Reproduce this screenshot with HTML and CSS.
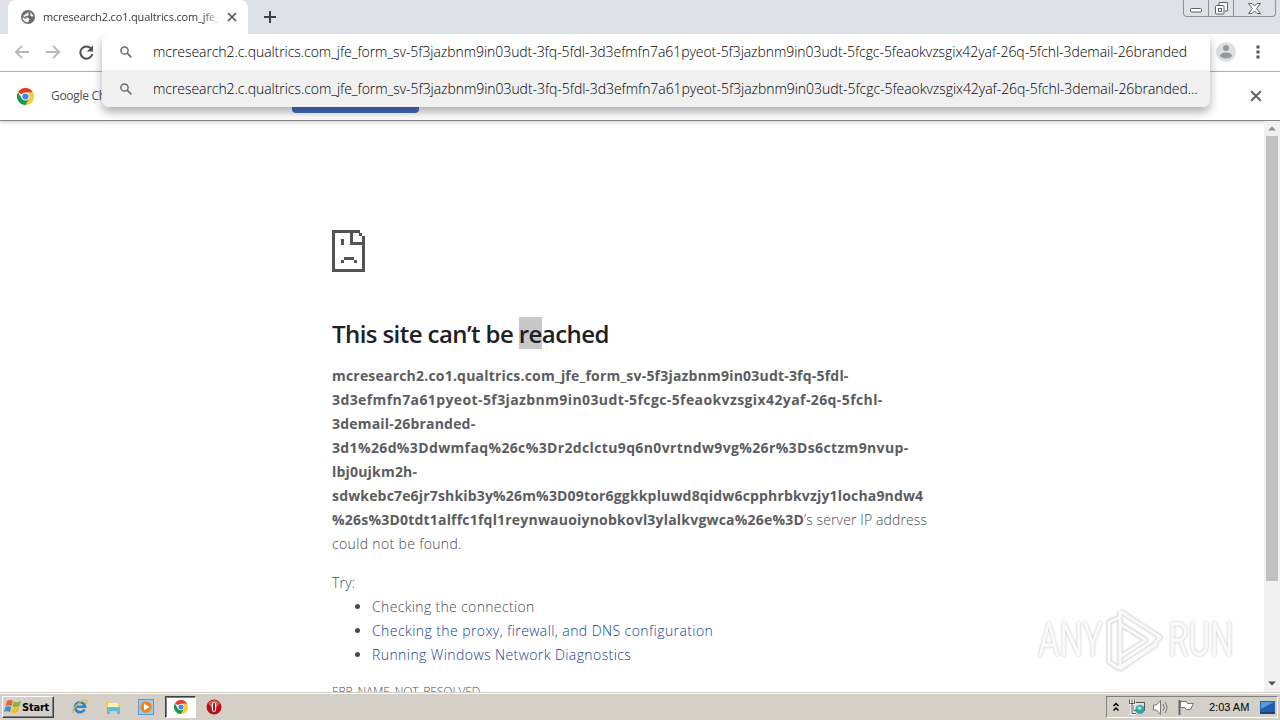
FILE: index.html
```html
<!DOCTYPE html>
<html lang="en">
<head>
  <meta charset="UTF-8" />
  <meta name="viewport" content="width=device-width, initial-scale=1.0" />
  <title>mcresearch2.co1.qualtrics.com</title>
  <link rel="stylesheet" href="styles.css">
</head>
<body>
  <svg class="defs" width="0" height="0">
    <symbol id="chrome" viewBox="0 0 24 24">
      <path d="M12 12 1.6 6A12 12 0 0 1 22.4 6Z" fill="#e33b2e"/>
      <path d="M22.4 6A12 12 0 0 1 12 24L17 14.500 12 6Z" fill="#fcc934"/>
      <path d="M1.600 6A12 12 0 0 0 12 24L17.200 15 12 12 7 15Z" fill="#1e9648"/>
      <circle cx="12" cy="12" r="5.600" fill="#fff"/>
      <circle cx="12" cy="12" r="4.400" fill="#4285f4"/>
    </symbol>
    <symbol id="search" viewBox="0 0 12 12">
      <circle cx="4.500" cy="4.500" r="3.600" fill="none" stroke="#6b6e72" stroke-width="1.500"/>
      <path d="M7.200 7.200 11.300 11.300" stroke="#6b6e72" stroke-width="1.700"/>
    </symbol>
    <symbol id="cross" viewBox="0 0 10 10">
      <path d="M1 1 9 9M9 1 1 9" stroke="currentColor" stroke-width="1.700"/>
    </symbol>
  </svg>

  <div class="screen">
    <div class="tabstrip">
      <div class="tab">
        <svg class="globe" width="14" height="14" viewBox="0 0 14 14"><circle cx="7" cy="7" r="7" fill="#686b70"/><path d="M8 1.400 7 3.300 8.300 4.600 6.500 6H4.500L4 7.200 7 7.500 8.500 9.500 7 12.600Q1.800 12 1.400 7L4 8.800 5.500 9 4.500 7.500 2 6ZM9.500 2 12.500 6 11 6.800 9.300 5.500Z" fill="#f4f5f6"/></svg>
        <span class="tab-title">mcresearch2.co1.qualtrics.com_jfe_</span>
        <svg class="tab-close" width="10" height="10"><use href="#cross"/></svg>
      </div>
      <svg class="new-tab" width="12" height="12"><path d="M6 0V12M0 6H12" stroke="#3c4043" stroke-width="2"/></svg>
      <div class="window-buttons">
        <span><svg width="13" height="5"><rect x=".5" y=".5" width="11" height="3.500" rx="1" fill="#fff" stroke="#59606b"/></svg></span>
        <span><svg width="13" height="13"><path d="M4 3V.5H12.500V9H10" fill="#fff" stroke="#59606b"/><rect x=".5" y="3.500" width="8.500" height="8.500" rx="1" fill="#fff" stroke="#59606b"/><rect x="3.500" y="6.500" width="3" height="3" fill="none" stroke="#59606b"/></svg></span>
        <span><svg width="13" height="11"><path d="M.5.500H4L6.500 3 9 .5H12.500L8.500 5.500 12.500 10.500H9L6.500 8 4 10.500H.5L4.500 5.500Z" fill="#fff" stroke="#59606b"/></svg></span>
      </div>
    </div>

    <div class="toolbar">
      <svg class="nav" width="15" height="14"><path d="M15 7H2M8 .8 1.800 7 8 13.200" fill="none" stroke="#b6b8ba" stroke-width="1.800"/></svg>
      <svg class="nav" width="15" height="14"><path d="M0 7H13M7 .8 13.200 7 7 13.200" fill="none" stroke="#b6b8ba" stroke-width="1.800"/></svg>
      <svg class="nav" width="15" height="15"><path d="M12.600 4.200A6.100 6.100 0 1 0 13.400 9" fill="none" stroke="#505357" stroke-width="2"/><path d="M14 .3V6.500H7.800Z" fill="#505357"/></svg>
      <span class="spacer"></span>
      <svg class="avatar" width="20" height="20"><circle cx="10" cy="10" r="10" fill="#dddedf"/><circle cx="10" cy="6" r="3" fill="#96999b"/><ellipse cx="10" cy="13.500" rx="6" ry="3" fill="#96999b"/></svg>
      <svg class="menu" width="4" height="14"><path d="M.5.500h3v3h-3zM.5 5.500h3v3h-3zM.5 10.500h3v3h-3z" fill="#505357"/></svg>
    </div>

    <div class="infobar">
      <svg width="17" height="17"><use href="#chrome"/></svg>
      <span class="info-text">Google Ch</span>
      <button class="default-button"></button>
      <svg class="info-close" width="12" height="12"><use href="#cross"/></svg>
    </div>

    <div class="suggestions">
      <div class="suggestion"><svg width="12" height="12"><use href="#search"/></svg><span>mcresearch2.c.qualtrics.com_jfe_form_sv-5f3jazbnm9in03udt-3fq-5fdl-3d3efmfn7a61pyeot-5f3jazbnm9in03udt-5fcgc-5feaokvzsgix42yaf-26q-5fchl-3demail-26branded</span></div>
      <div class="suggestion selected"><svg width="12" height="12"><use href="#search"/></svg><span>mcresearch2.c.qualtrics.com_jfe_form_sv-5f3jazbnm9in03udt-3fq-5fdl-3d3efmfn7a61pyeot-5f3jazbnm9in03udt-5fcgc-5feaokvzsgix42yaf-26q-5fchl-3demail-26branded...</span></div>
    </div>

    <div class="view">
      <div class="page">
        <svg class="sad" width="33" height="42" shape-rendering="crispEdges"><path d="M1.500 1.500H26M1.500 0V42M0 40.500H33M31.500 6V42M19.500 0V15M18 13.500H33" fill="none" stroke="#535353" stroke-width="3"/><path d="M26 0h2v3h-2zM27 3h3v3h-3zM9 9h3v6H9zM12 27h10v3H12zM9 30h3v3H9zM22 30h3v3h-3z" fill="#535353"/></svg>
        <h1>This site can’t be <mark>re</mark>ached</h1>
        <p class="message"><strong><span class="l1">mcresearch2.co1.qualtrics.com_jfe_form_sv-5f3jazbnm9in03udt-3fq-5fdl-</span><br><span class="l2">3d3efmfn7a61pyeot-5f3jazbnm9in03udt-5fcgc-5feaokvzsgix42yaf-26q-5fchl-</span><br><span class="l3">3demail-26branded-</span><br><span class="l4">3d1%26d%3Ddwmfaq%26c%3Dr2dclctu9q6n0vrtndw9vg%26r%3Ds6ctzm9nvup-</span><br><span class="l5">lbj0ujkm2h-</span><br><span class="l6">sdwkebc7e6jr7shkib3y%26m%3D09tor6ggkkpluwd8qidw6cpphrbkvzjy1locha9ndw4</span><br><span class="l7">%26s%3D0tdt1alffc1fql1reynwauoiynobkovl3ylalkvgwca%26e%3D</span></strong><span class="rest">’s server IP address</span><br>could not be found.</p>
        <p class="try">Try:</p>
        <ul>
          <li>Checking the connection</li>
          <li><a>Checking the proxy, firewall, and DNS configuration</a></li>
          <li><a>Running Windows Network Diagnostics</a></li>
        </ul>
        <p class="code">ERR_NAME_NOT_RESOLVED</p>
      </div>
      <div class="scrollbar">
        <svg width="8" height="5"><path d="M0 4.500 4 .5 8 4.500Z" fill="#929292"/></svg>
        <div class="thumb"></div>
        <svg width="8" height="5"><path d="M0 .5 4 4.500 8 .5Z" fill="#505050"/></svg>
      </div>
    </div>

    <div class="taskbar">
      <div class="start"><svg width="18" height="16" viewBox="0 0 18 16"><path d="M3 2Q6 0 9 2L7.500 7Q5 5.500 1.500 7Z" fill="#e9642b"/><path d="M10 2.500Q13 4 17 2L15.500 7Q12 9 8.500 7.500Z" fill="#82b63b"/><path d="M1.300 8Q4.500 6.500 7.200 8L6 13Q3 11.500 0 13Z" fill="#3e8ed0"/><path d="M8.300 8.500Q12 10 15.200 8L14 13Q10 15 7 13.500Z" fill="#f6be35"/></svg><b>Start</b></div>
      <svg class="task ie" width="16" height="16" viewBox="0 0 16 16"><path d="M12.500 10.500A5 5 0 1 1 13 7.800H4" fill="none" stroke="#2687d0" stroke-width="2.600"/><path d="M2 14Q-1 13 4 7 10 0 14 1 16 2 13.500 5" fill="none" stroke="#d9b646" stroke-width="1.300"/></svg>
      <svg class="task" width="16" height="16" viewBox="0 0 16 16"><path d="M1 2h5l1 2h7v9H1z" fill="#e9cd66"/><path d="M3 4h10v4H3z" fill="#fff4b5"/><path d="M2 15V9q0-1 1-1h11q1 0 1 1v6h-3v-3H5v3z" fill="#62b8dd"/></svg>
      <svg class="task" width="16" height="16" viewBox="0 0 16 16"><rect x=".5" y=".5" width="15" height="15" fill="#9ccbed" stroke="#5799ca"/><circle cx="8" cy="8" r="5.700" fill="#f58216"/><path d="M6 4.500 11.500 8 6 11.500Z" fill="#fff"/></svg>
      <div class="active-task"><svg width="14" height="14"><use href="#chrome"/></svg></div>
      <svg class="opera" width="16" height="16" viewBox="0 0 16 16"><circle cx="8" cy="8" r="7.500" fill="#b5121b"/><path d="M2 4Q8-2 14 4L12 7H4Z" fill="#d95a56"/><ellipse cx="8" cy="8" rx="2.300" ry="5" fill="#fff"/><ellipse cx="8" cy="8" rx="1" ry="4.500" fill="#8c1015"/></svg>
      <span class="spacer"></span>
      <div class="tray">
        <svg class="chev" width="6" height="10"><path d="M.5 4 3 1.500 5.500 4M.5 8.500 3 6 5.500 8.500" fill="none" stroke="#000" stroke-width="1.500"/></svg>
        <svg class="net" width="16" height="16"><rect x="4.500" y="3.500" width="11" height="8" fill="#d6e5e8" stroke="#555"/><path d="M1 .5v4h4v-4M3 4.500v10h4" fill="none" stroke="#fff" stroke-width="3"/><path d="M.5.500v4h5v-4M3 .5v14h4" fill="none" stroke="#555"/><circle cx="11" cy="10.500" r="4.500" fill="#35a5ad"/><path d="M8 9q3-3 5 0l-2 2z" fill="#a8e6df"/></svg>
        <svg class="sound" width="16" height="15"><path d="M.5 5h3l4-4.500v14L3.500 10h-3z" fill="#fff" stroke="#777"/><path d="M10 4q2.500 3.500 0 7M12 2q4 5.500 0 11" fill="none" stroke="#777"/></svg>
        <svg class="flag" width="16" height="15"><path d="M1.500 0v15" stroke="#666" stroke-width="2"/><path d="M2.500 1.500h6l1 2h6l-3 6H8l-1-2H2.500z" fill="#fff" stroke="#777"/></svg>
        <span class="clock">2:03 AM</span>
        <svg class="desktop" width="15" height="13"><rect width="15" height="11" fill="#245eaf"/><path d="M1 1h13L1 8z" fill="#5a9bdc"/><path d="M0 12h15" stroke="#1b407e" stroke-width="2"/></svg>
      </div>
    </div>

    <div class="watermark">
      <span class="any">ANY</span>
      <svg width="58" height="64" viewBox="0 0 58 64"><g fill="none" stroke-linejoin="round"><path d="M14 3 54 29 48 37 14 59V3M14 16 40 32 14 49M14 9 3 14V54L14 61 51 36" stroke="#dedede" stroke-width="5"/><path d="M14 3 54 29 48 37 14 59V3M14 16 40 32 14 49M14 9 3 14V54L14 61 51 36" stroke="#fafafa" stroke-width="3"/></g></svg>
      <span class="run">RUN</span>
    </div>
  </div>
</body>
</html>
```
FILE: styles.css
```css
* { box-sizing: border-box; }
body { margin: 0; font-family: "Open Sans", "Noto Sans", sans-serif; background: #fff; overflow: hidden; }
svg { display: block; flex: none; }
.defs { position: absolute; }
.spacer { flex: 1; }
.screen { position: relative; width: 1280px; height: 720px; display: flex; flex-direction: column; overflow: hidden; }

.tabstrip { height: 34px; flex: none; display: flex; background: #dee1e6; padding-left: 8px; }
.tab { width: 240px; height: 34px; background: #fff; border-radius: 8px 8px 0 0; display: flex; align-items: center; padding: 0 11px 0 13px; }
.tab-title { width: 176px; margin-left: 8px; padding-bottom: 2px; overflow: hidden; white-space: nowrap; font-size: 11px; letter-spacing: -0.15px; color: #35383c; -webkit-mask-image: linear-gradient(to right, #000 160px, transparent 178px); }
.tab-close { margin-left: 8px; color: #54575b; }
.new-tab { margin: 11px 0 0 16px; }
.window-buttons { margin-left: auto; margin-right: 4px; width: 93px; height: 17px; border: 1px solid #8c919b; border-top: 0; border-radius: 0 0 4px 4px; display: grid; grid-template-columns: 25px 25px 1fr; }
.window-buttons span { display: flex; align-items: center; justify-content: center; border-right: 1px solid #8c919b; }
.window-buttons span:first-child { padding-top: 5px; }
.window-buttons span:last-child { border: 0; }

.toolbar { height: 38px; flex: none; display: flex; align-items: center; padding: 0 20px 1px 14px; border-bottom: 1px solid #a9aaab; }
.nav { margin-right: 17px; }
.nav:nth-child(2) { margin-right: 18px; }
.avatar { margin-right: 20px; }

.infobar { height: 49px; flex: none; display: flex; align-items: center; padding: 0 18px 0 17px; border-bottom: 1px solid #858585; box-shadow: 0 1px 4px #ccc; font-size: 12px; color: #4c4f53; }
.info-text { width: 241px; margin-left: 17px; padding-bottom: 2px; white-space: nowrap; letter-spacing: -0.3px; }
.default-button { width: 127px; height: 33px; border: 0; border-radius: 4px; background: #4471c4; }
.info-close { margin-left: auto; color: #606368; }

.suggestions { position: absolute; left: 102px; top: 34px; width: 1108px; height: 73px; background: #fff; border-radius: 7px; overflow: hidden; box-shadow: 0 5px 10px rgba(0,0,0,.32); clip-path: inset(0 -12px -14px -12px); }
.suggestion { height: 36px; display: flex; align-items: center; padding-left: 18px; gap: 21px; font-size: 14px; font-weight: 300; color: #000; white-space: nowrap; }
.suggestion span { padding-bottom: 2px; letter-spacing: -0.058px; }
.selected { height: 37px; background: #f0f0f0; }
.selected span { padding-bottom: 0; letter-spacing: -0.053px; }

.view { height: 571px; flex: none; display: flex; overflow: hidden; }
.page { width: 1264px; padding: 109px 330px 0 332px; color: #4a4b4e; font-size: 14px; font-weight: 300; line-height: 24px; white-space: nowrap; letter-spacing: 0.34px; }
h1 { margin: 45px 0 0; font-size: 24px; line-height: 33px; font-weight: 600; letter-spacing: -0.58px; color: #202124; }
mark { display: inline-block; height: 32px; background: #c8c8c8; color: inherit; }
p { margin: 0; }
.message { margin-top: 14px; }
strong { font-weight: 700; color: #5b5c5f; }
.l1, .l3, .l5, .l7 { letter-spacing: 0.2px; }
.l2 { letter-spacing: 0.4px; }
.l4 { letter-spacing: 0.36px; }
.l6 { letter-spacing: 0.17px; }
.rest { letter-spacing: 0.12px; }
.try { margin-top: 15px; letter-spacing: 0.2px; }
ul { margin: 0; padding-left: 40px; }
a { color: #123f94; letter-spacing: 0.42px; }
.code { margin-top: 13px; font-size: 12px; letter-spacing: -0.1px; }

.scrollbar { width: 16px; background: #f1f1f1; display: flex; flex-direction: column; align-items: center; padding: 5px 0 6px; }
.thumb { width: 12px; height: 445px; margin: 5px 0 auto; background: #c1c1c1; }

.taskbar { height: 28px; flex: none; display: flex; align-items: center; padding: 3px 2px 2px; background: #d4d0c8; border-top: 1px solid #d4d0c8; box-shadow: inset 0 1px #fff; font-family: "DejaVu Sans", sans-serif; font-size: 11px; color: #000; }
.start { width: 52px; height: 22px; display: flex; align-items: center; padding-left: 1px; border: 1px solid; border-color: #fff #404040 #404040 #fff; box-shadow: inset -1px -1px #808080; }
.start b { font-family: "DejaVu Sans Condensed", "DejaVu Sans", sans-serif; font-size: 11px; letter-spacing: -0.2px; }
.task { margin-right: 17px; }
.ie { margin-left: 18px; }
.active-task { width: 31px; height: 22px; display: flex; align-items: center; justify-content: center; margin-left: -6px; background: #fff; border: 1px solid; border-color: #404040 #fff #fff #404040; box-shadow: inset 1px 1px #808080; }
.opera { margin-left: 10px; }
.tray { width: 172px; height: 22px; display: flex; align-items: center; border: 1px solid; border-color: #808080 #fff #fff #808080; padding-left: 6px; }
.net { margin-left: 10px; }
.sound { margin-left: 8px; }
.flag { margin-left: 9px; }
.clock { width: 41px; margin-left: 15px; font-family: "Liberation Sans", Arial, sans-serif; font-size: 11px; white-space: nowrap; }
.desktop { margin-left: 10px; }

.watermark { position: absolute; left: 1038px; top: 608px; display: flex; align-items: center; font-family: "Roboto", sans-serif; font-size: 48px; line-height: 64px; color: #fafafa; text-shadow: 0 0 3px #bbb; }
.watermark span { width: 64px; transform-origin: left; transform: scaleX(.69); white-space: nowrap; }
.watermark svg { margin: 0 4px 0 4px; filter: drop-shadow(0 0 1px #ddd); }
```
